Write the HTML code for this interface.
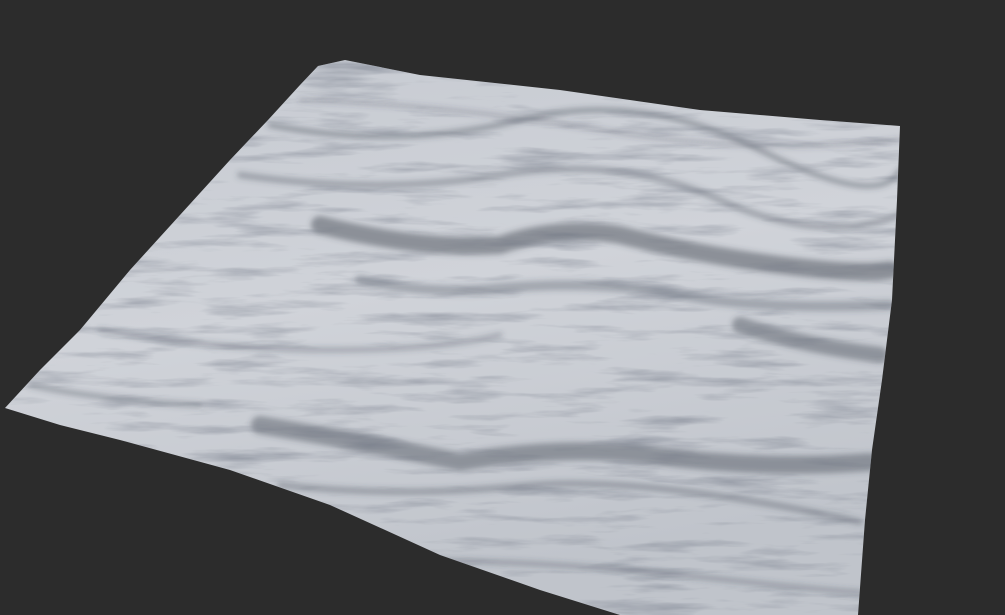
<!DOCTYPE html>
<html><head><meta charset="utf-8"><style>
html,body{margin:0;padding:0;background:#2c2c2c;width:1005px;height:615px;overflow:hidden}
</style></head><body>
<svg width="1005" height="615" viewBox="0 0 1005 615" xmlns="http://www.w3.org/2000/svg">
<defs>
<linearGradient id="g" x1="0" y1="0" x2="0.3" y2="1">
<stop offset="0" stop-color="#c6cad1"/>
<stop offset="0.5" stop-color="#d0d3d9"/>
<stop offset="1" stop-color="#c0c4cb"/>
</linearGradient>
<filter id="b" x="-10%" y="-10%" width="120%" height="120%"><feGaussianBlur stdDeviation="3"/></filter>
<filter id="n" x="0" y="0" width="100%" height="100%">
<feTurbulence type="fractalNoise" baseFrequency="0.01 0.08" numOctaves="4" seed="3"/>
<feColorMatrix values="0 0 0 0 0.15  0 0 0 0 0.17  0 0 0 0 0.22  0 0 0 -2 1.0"/>
<feComposite in2="SourceGraphic" operator="in"/>
</filter>
<clipPath id="c"><path id="p" d="M318,66 L345,60 L420,75 L560,90 L700,110 L820,120 L900,126 L897,200 L892,300 L882,380 L872,450 L865,520 L858,615 L620,615 L540,590 L440,555 L330,505 L230,470 L120,440 L60,425 L5,408 L40,370 L80,330 L130,270 L180,215 L230,160 L268,120 L300,85 Z"/></clipPath>
</defs>
<use href="#p" fill="url(#g)"/>
<g clip-path="url(#c)"><g fill="none" stroke="#3a414c" stroke-linecap="round" filter="url(#b)">
<path d="M270,125 Q400,150 520,120 T760,150 T900,170" stroke-width="5" opacity="0.4"/>
<path d="M240,175 Q380,195 500,175 T720,200 T900,215" stroke-width="6" opacity="0.35"/>
<path d="M320,225 Q420,250 500,245 Q560,225 620,235 Q700,255 780,265 T890,270" stroke-width="18" opacity="0.45"/>
<path d="M360,280 Q430,295 500,288 Q600,280 680,295 T890,305" stroke-width="10" opacity="0.3"/>
<path d="M740,325 Q800,345 880,355" stroke-width="16" opacity="0.4"/>
<path d="M100,330 Q220,350 330,350 T500,335" stroke-width="5" opacity="0.3"/>
<path d="M260,425 Q380,445 460,462 Q560,445 650,455 Q760,470 870,462" stroke-width="18" opacity="0.4"/>
<path d="M280,485 Q400,498 520,486 T860,522" stroke-width="6" opacity="0.35"/>
<path d="M420,560 Q560,562 700,577 T860,592" stroke-width="5" opacity="0.3"/>
<path d="M30,385 Q100,400 200,405" stroke-width="5" opacity="0.35"/>
<path d="M300,100 Q450,105 600,130 T900,140" stroke-width="4" opacity="0.25"/>
</g></g>
<use href="#p" fill="#fff" filter="url(#n)" opacity="0.55"/>
</svg>
</body></html>
